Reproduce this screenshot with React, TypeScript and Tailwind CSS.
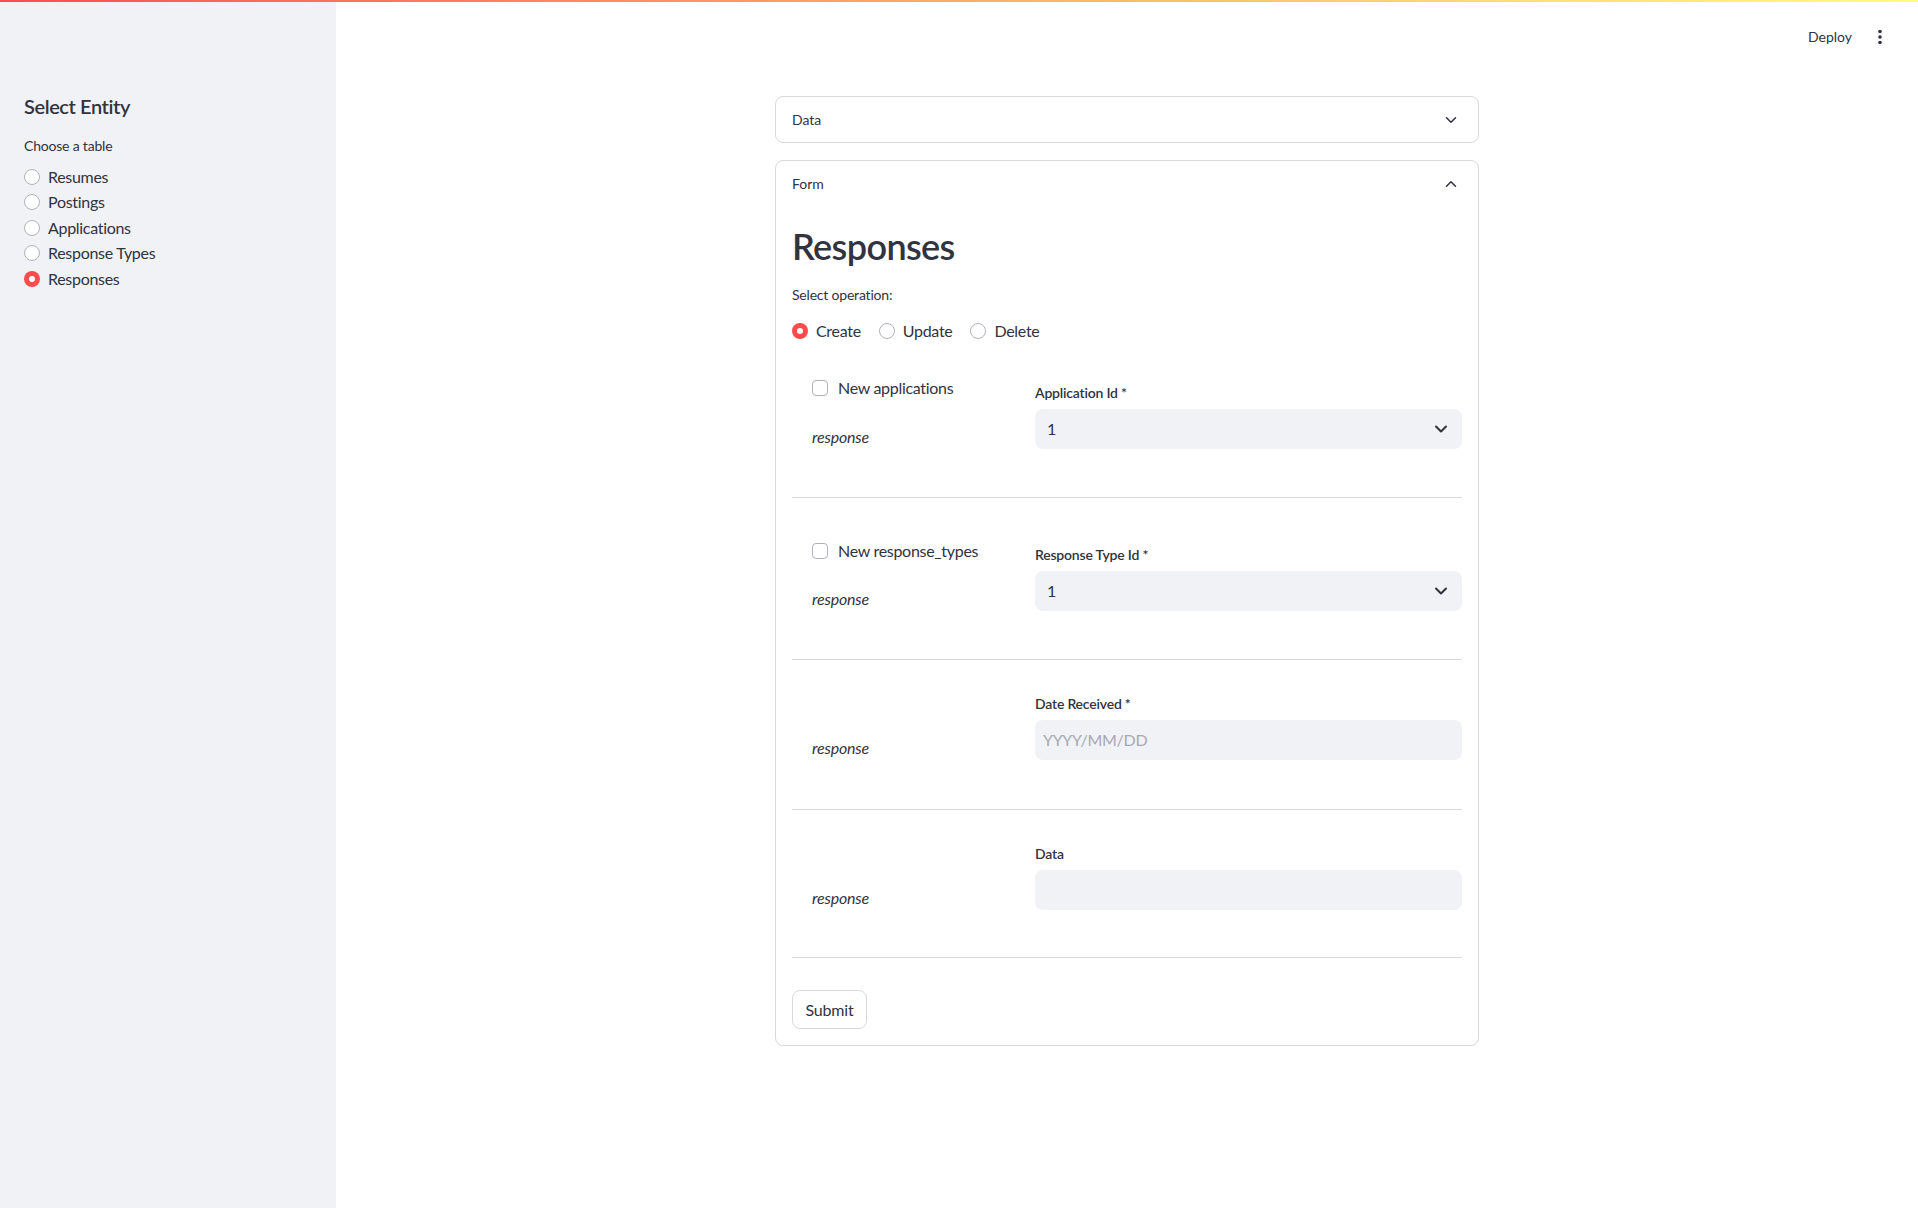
import { ChevronDown, ChevronUp } from "lucide-react";

const tables = ["Resumes", "Postings", "Applications", "Response Types", "Responses"];
const operations = ["Create", "Update", "Delete"];

function Radio({ checked, label }: { checked: boolean; label: string }) {
  return (
    <div className="flex items-center gap-2">
      {checked ? (
        <span className="flex h-4 w-4 items-center justify-center rounded-full bg-[#ff4b4b]">
          <span className="h-1.5 w-1.5 rounded-full bg-white" />
        </span>
      ) : (
        <span className="h-4 w-4 rounded-full border border-[#b0b2b9] bg-white" />
      )}
      <span className="text-base tracking-[-0.3px] text-[#31333f]">{label}</span>
    </div>
  );
}

function Checkbox({ label }: { label: string }) {
  return (
    <div className="flex h-6 items-center gap-2.5">
      <span className="h-4 w-4 rounded-[4px] border border-[#b0b2b9] bg-white" />
      <span className="text-base tracking-[-0.3px] text-[#31333f]">{label}</span>
    </div>
  );
}

function SelectBox({ label }: { label: string }) {
  return (
    <div className="flex-1">
      <p className="h-5 text-sm leading-5 font-semibold tracking-[-0.2px] text-[#31333f]">{label}</p>
      <div className="mt-1.5 flex h-10 items-center justify-between rounded-lg bg-[#f0f2f6] pl-3 pr-[11px]">
        <span className="text-base text-[#31333f]">1</span>
        <ChevronDown size={20} strokeWidth={2.5} className="text-[#31333f]" />
      </div>
    </div>
  );
}

function TextBox({ label, placeholder }: { label: string; placeholder?: string }) {
  return (
    <div className="flex-1">
      <p className="h-5 text-sm leading-5 font-semibold tracking-[-0.2px] text-[#31333f]">{label}</p>
      <div className="mt-1.5 flex h-10 items-center rounded-lg bg-[#f0f2f6] px-2">
        <span className="text-base tracking-[-0.3px] text-[#a6a9b3]">{placeholder}</span>
      </div>
    </div>
  );
}

function Response() {
  return <p className="h-6 text-base leading-6 italic tracking-[-0.2px] text-[#31333f]">response</p>;
}

function Divider({ className }: { className: string }) {
  return <div className={"h-px bg-[#d9d9dc] " + className} />;
}

export default function App() {
  return (
    <div className="flex min-h-screen flex-col bg-white font-['Lato',sans-serif] text-[#31333f]">
      <div className="h-[2px] bg-linear-to-r from-[#ff4b4b] to-[#fffd80]" />
      <div className="flex h-[1206px]">
        <aside className="w-[336px] shrink-0 bg-[#f0f2f6] px-6 pt-[90px]">
          <h3 className="h-7 text-xl leading-7 font-semibold tracking-[-0.4px]">Select Entity</h3>
          <p className="mt-[16px] h-5 text-sm leading-5 tracking-[-0.2px]">Choose a table</p>
          <div className="mt-[8px] flex flex-col">
            {tables.map((t) => (
              <div key={t} className="flex h-[25.5px] items-center">
                <Radio checked={t === "Responses"} label={t} />
              </div>
            ))}
          </div>
        </aside>

        <main className="flex-1">
          <div className="flex h-[69px] items-center justify-end gap-5 pr-[30px]">
            <span className="text-sm">Deploy</span>
            <svg width="16" height="16" viewBox="0 0 16 16" fill="#31333f">
              <circle cx="8" cy="2.5" r="1.8" />
              <circle cx="8" cy="8" r="1.8" />
              <circle cx="8" cy="13.5" r="1.8" />
            </svg>
          </div>

          <div className="mx-auto mt-[25px] w-[704px]">
            <div className="flex h-[47px] items-center justify-between rounded-lg border border-[#d9d9dc] pl-4 pr-[18px]">
              <span className="text-sm">Data</span>
              <ChevronDown size={18} strokeWidth={2} />
            </div>

            <div className="mt-[17px] rounded-lg border border-[#d9d9dc]">
              <div className="flex h-[46px] items-center justify-between pl-4 pr-[18px]">
                <span className="text-sm">Form</span>
                <ChevronUp size={18} strokeWidth={2} />
              </div>

              <div className="px-4 pb-4">
                <h2 className="mt-[17px] h-[44px] text-[36px] leading-[44px] font-semibold tracking-[-0.6px]">Responses</h2>
                <p className="mt-[17px] h-5 text-sm leading-5 tracking-[-0.2px]">Select operation:</p>
                <div className="mt-[14px] flex h-6 items-center gap-[18px]">
                  {operations.map((o) => (
                    <Radio key={o} checked={o === "Create"} label={o} />
                  ))}
                </div>

                <div className="mt-[33px] flex items-end">
                  <div className="flex w-[243px] flex-col pl-5">
                    <Checkbox label="New applications" />
                    <div className="mt-[25px]">
                      <Response />
                    </div>
                  </div>
                  <SelectBox label="Application Id *" />
                </div>
                <Divider className="mt-[48px]" />

                <div className="mt-[41px] flex items-end">
                  <div className="flex w-[243px] flex-col pl-5">
                    <Checkbox label="New response_types" />
                    <div className="mt-6">
                      <Response />
                    </div>
                  </div>
                  <SelectBox label="Response Type Id *" />
                </div>
                <Divider className="mt-[48px]" />

                <div className="mt-[34px] flex items-end">
                  <div className="w-[243px] pl-5">
                    <Response />
                  </div>
                  <TextBox label="Date Received *" placeholder="YYYY/MM/DD" />
                </div>
                <Divider className="mt-[49px]" />

                <div className="mt-[34px] flex items-end">
                  <div className="w-[243px] pl-5">
                    <Response />
                  </div>
                  <TextBox label="Data" />
                </div>
                <Divider className="mt-[47px]" />

                <button className="mt-[32px] flex h-[39px] w-[75px] items-center justify-center rounded-lg border border-[#d9d9dc] bg-white text-base tracking-[-0.2px]">
                  Submit
                </button>
              </div>
            </div>
          </div>
        </main>
      </div>
    </div>
  );
}
